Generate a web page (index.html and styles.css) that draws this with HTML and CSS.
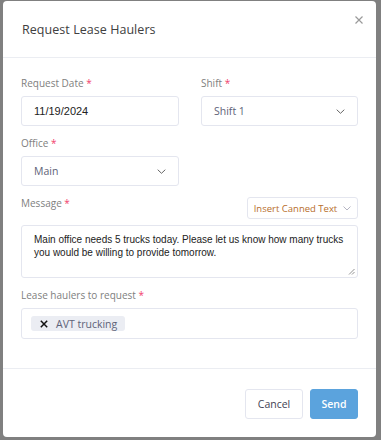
FILE: index.html
```html
<!DOCTYPE html>
<html>
<head>
<meta charset="utf-8">
<link rel="stylesheet" href="styles.css">
</head>
<body>
<div class="modal">
  <div class="modal-header">
    <h1 class="title">Request Lease Haulers</h1>
    <span class="close" aria-label="Close">
      <svg width="8" height="8" viewBox="0 0 8 8"><path d="M0.5 0.5L7.5 7.5M7.5 0.5L0.5 7.5" stroke="#9a9a9a" stroke-width="1.2" fill="none"/></svg>
    </span>
  </div>
  <div class="modal-body">
    <div class="row">
      <div class="group">
        <label class="label">Request Date <span class="req">*</span></label>
        <div class="input"><span class="date">11/19/2024</span></div>
      </div>
      <div class="group">
        <label class="label">Shift <span class="req">*</span></label>
        <div class="input select"><span>Shift 1</span>
          <svg class="chev" width="9" height="5" viewBox="0 0 9 5"><path d="M0.7 0.7L4.5 4.3L8.3 0.7" stroke="#666" stroke-width="1" fill="none"/></svg>
        </div>
      </div>
    </div>
    <div class="row">
      <div class="group">
        <label class="label">Office <span class="req">*</span></label>
        <div class="input select"><span>Main</span>
          <svg class="chev" width="9" height="5" viewBox="0 0 9 5"><path d="M0.7 0.7L4.5 4.3L8.3 0.7" stroke="#666" stroke-width="1" fill="none"/></svg>
        </div>
      </div>
      <div class="group"></div>
    </div>
    <div class="msg-head">
      <label class="label">Message <span class="req">*</span></label>
      <div class="canned">Insert Canned Text
        <svg width="8" height="5" viewBox="0 0 8 5"><path d="M0.5 0.5L4 4L7.5 0.5" stroke="#b5b5c3" stroke-width="1" fill="none"/></svg>
      </div>
    </div>
    <div class="textarea">Main office needs 5 trucks today. Please let us know how many trucks you would be willing to provide tomorrow.
      <svg class="grip" width="7" height="7" viewBox="0 0 7 7"><path d="M6.5 1L1 6.5M6.5 4L4 6.5" stroke="#777" stroke-width="0.8" fill="none"/></svg>
    </div>
    <div class="group last">
      <label class="label">Lease haulers to request <span class="req">*</span></label>
      <div class="input tags">
        <span class="chip">
          <svg class="x" width="8" height="8" viewBox="0 0 8 8"><path d="M0.8 0.8L7.2 7.2M7.2 0.8L0.8 7.2" stroke="#111" stroke-width="1.5" fill="none"/></svg>AVT trucking</span>
      </div>
    </div>
  </div>
  <div class="modal-footer">
    <button class="btn cancel">Cancel</button>
    <button class="btn send">Send</button>
  </div>
</div>
</body>
</html>
```
FILE: styles.css
```css
* { box-sizing: border-box; }
html, body { margin: 0; padding: 0; }
body {
  background: #808080;
  width: 381px;
  height: 440px;
  overflow: hidden;
  font-family: "Open Sans", "Liberation Sans", sans-serif;
}
.modal {
  margin: 1px 5px 0 3px;
  width: 373px;
  height: 436px;
  background: #fff;
  border-radius: 4px;
  display: flex;
  flex-direction: column;
}
.modal-header {
  height: 57px;
  border-bottom: 1px solid #ebedf2;
  display: flex;
  align-items: center;
  justify-content: space-between;
  padding: 0 14px 0 19px;
  position: relative;
}
.title {
  margin: 0;
  font-size: 12.5px;
  font-weight: 400;
  color: #404040;
  letter-spacing: 0.05px;
}
.close {
  position: absolute;
  right: 13px;
  top: 15px;
  width: 8px;
  height: 8px;
  display: flex;
}
.modal-body {
  padding: 17px 18px 0 18px;
  height: 311px;
  border-bottom: 1px solid #ebedf2;
}
.row {
  display: flex;
  gap: 22px;
}
.group {
  flex: 1;
  margin-bottom: 9px;
}
.row .group:first-child { flex: 0 0 158px; }
.label {
  display: block;
  font-size: 10px;
  line-height: 16px;
  color: #808080;
  margin-bottom: 5px;
}
.req { color: #f1416c; }
.input {
  height: 30px;
  border: 1px solid #e4e6ef;
  border-radius: 3px;
  display: flex;
  align-items: center;
  padding: 0 12px;
  font-size: 10.5px;
  color: #5e6278;
}
.date {
  font-family: "Liberation Sans", Arial, sans-serif;
  font-size: 11px;
  color: #222;
}
.select { justify-content: space-between; padding-right: 12px; }
.chev { display: block; }
.msg-head {
  display: flex;
  justify-content: space-between;
  align-items: flex-start;
  height: 30px;
}
.canned {
  margin-top: 2px;
  height: 22px;
  width: 111px;
  border: 1px solid #e4e6ef;
  border-radius: 3px;
  display: flex;
  align-items: center;
  justify-content: center;
  gap: 6px;
  font-size: 9.5px;
  color: #b76e2c;
}
.textarea {
  height: 53px;
  border: 1px solid #e4e6ef;
  border-radius: 3px;
  padding: 7px 8px 7px 12px;
  font-family: "Liberation Sans", Arial, sans-serif;
  font-size: 10px;
  line-height: 13px;
  color: #222;
  position: relative;
  margin-bottom: 9px;
}
.grip { position: absolute; right: 2px; bottom: 2px; }
.tags { height: 31px; padding: 0 9px; }
.chip {
  display: inline-flex;
  align-items: center;
  height: 15px;
  padding: 0 8px 0 9px;
  background: #ebedf3;
  border-radius: 3px;
  font-size: 10.5px;
  color: #5e6278;
}
.x {
  display: block;
  margin-right: 8px;
}
.modal-footer {
  flex: 1;
  display: flex;
  justify-content: flex-end;
  align-items: flex-start;
  gap: 7px;
  padding: 20px 18px 0 0;
}
.btn {
  height: 30px;
  border-radius: 3px;
  font-family: "Open Sans", "Liberation Sans", sans-serif;
  font-size: 10.5px;
  padding: 0;
  cursor: pointer;
}
.cancel {
  width: 58px;
  background: #fff;
  border: 1px solid #e4e6ef;
  color: #3f4254;
}
.send {
  width: 48px;
  background: #5ba3dd;
  border: 1px solid #5ba3dd;
  color: #fff;
  font-weight: 600;
}
```
